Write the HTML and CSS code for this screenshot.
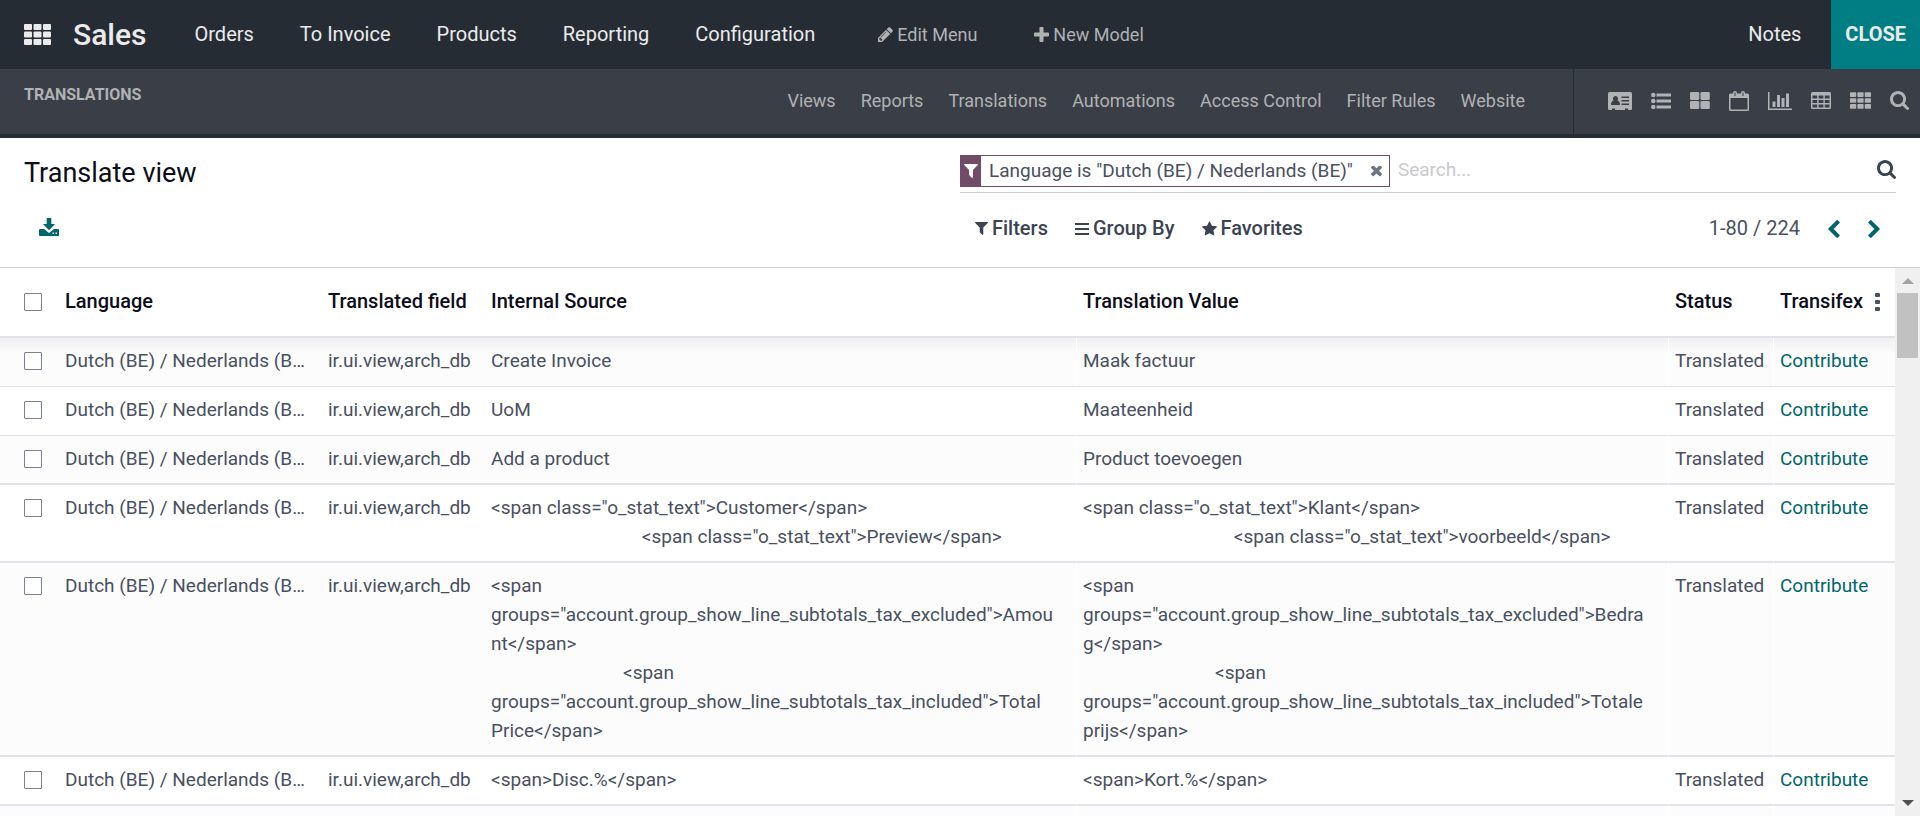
FILE: index.html
```html
<!DOCTYPE html>
<html lang="en">
<head>
<meta charset="utf-8">
<title>Sales - Translate view</title>
<link rel="stylesheet" href="styles.css">
</head>
<body>
<svg class="sprite" aria-hidden="true">
  <symbol id="i-th" viewBox="0 0 27 21"><rect x="0" y="0" width="8" height="6" rx="1"/><rect x="9.500" y="0" width="8" height="6" rx="1"/><rect x="19" y="0" width="8" height="6" rx="1"/><rect x="0" y="7.500" width="8" height="6" rx="1"/><rect x="9.500" y="7.500" width="8" height="6" rx="1"/><rect x="19" y="7.500" width="8" height="6" rx="1"/><rect x="0" y="15" width="8" height="6" rx="1"/><rect x="9.500" y="15" width="8" height="6" rx="1"/><rect x="19" y="15" width="8" height="6" rx="1"/></symbol>
  <symbol id="i-search" viewBox="64 128 1664 1664"><path d="M1216 832q0-185-131.5-316.5t-316.5-131.5-316.5 131.5-131.5 316.5 131.5 316.5 316.5 131.5 316.5-131.5 131.5-316.5zm512 832q0 52-38 90t-90 38q-54 0-90-38l-343-342q-179 124-399 124-143 0-273.5-55.5t-225-150-150-225-55.5-273.5 55.5-273.5 150-225 225-150 273.5-55.5 273.5 55.5 225 150 150 225 55.5 273.5q0 220-124 399l343 343q37 37 37 90z"/></symbol>
  <symbol id="i-filter" viewBox="190 256 1412 1412"><path d="M1595 295q17 41-14 70l-493 493v742q0 42-39 59-13 5-25 5-27 0-45-19l-256-256q-19-19-19-45v-486l-493-493q-31-29-14-70 17-39 59-39h1280q42 0 59 39z"/></symbol>
  <symbol id="i-star" viewBox="64 0 1664 1792"><path d="M1728 647q0 22-26 48l-363 354 86 500q1 7 1 20 0 21-10.5 35.5t-30.5 14.5q-19 0-40-12l-449-236-449 236q-22 12-40 12-21 0-31.5-14.5t-10.5-35.5q0-6 2-20l86-500-364-354q-25-27-25-48 0-37 56-46l502-73 225-455q19-41 49-41t49 41l225 455 502 73q56 9 56 46z"/></symbol>
  <symbol id="i-left" viewBox="410 30 1040 1610"><path d="M1427 301l-531 531 531 531q19 19 19 45t-19 45l-166 166q-19 19-45 19t-45-19l-742-742q-19-19-19-45t19-45l742-742q19-19 45-19t45 19l166 166q19 19 19 45t-19 45z"/></symbol>
  <symbol id="i-right" viewBox="344 30 1040 1610"><path d="M1363 877l-742 742q-19 19-45 19t-45-19l-166-166q-19-19-19-45t19-45l531-531-531-531q-19-19-19-45t19-45l166-166q19-19 45-19t45 19l742 742q19 19 19 45t-19 45z"/></symbol>
  <symbol id="i-pencil" viewBox="128 128 1536 1536"><path d="M491 1536l91-91-235-235-91 91v107h128v128h107zm523-928q0-22-22-22-10 0-17 7l-542 542q-7 7-7 17 0 22 22 22 10 0 17-7l542-542q7-7 7-17zm-54-192l416 416-832 832h-416v-416zm683 96q0 53-37 90l-166 166-416-416 166-165q36-38 90-38 53 0 91 38l235 234q37 39 37 91z"/></symbol>
  <symbol id="i-plus" viewBox="192 128 1408 1408"><path d="M1600 736v192q0 40-28 68t-68 28h-416v416q0 40-28 68t-68 28h-192q-40 0-68-28t-28-68v-416h-416q-40 0-68-28t-28-68v-192q0-40 28-68t68-28h416v-416q0-40 28-68t68-28h192q40 0 68 28t28 68v416h416q40 0 68 28t28 68z"/></symbol>
  <symbol id="i-times" viewBox="300 432 1192 1192"><path d="M1490 1322q0 40-28 68l-136 136q-28 28-68 28t-68-28l-294-294-294 294q-28 28-68 28t-68-28l-136-136q-28-28-28-68t28-68l294-294-294-294q-28-28-28-68t28-68l136-136q28-28 68-28t68 28l294 294 294-294q28-28 68-28t68 28l136 136q28 28 28 68t-28 68l-294 294 294 294q28 28 28 68z"/></symbol>
  <symbol id="i-bars" viewBox="0 0 14 12"><path d="M0 0h14v2H0zM0 5h14v2H0zM0 10h14v2H0z"/></symbol>
  <symbol id="i-import" viewBox="0 0 20 18"><path d="M7.700 0h4.600v6H16l-6 6.200L4 6h3.700zM1 11h4l5 4 5-4h4q1 0 1 1v5q0 1-1 1H1q-1 0-1-1v-5q0-1 1-1zm12.500 3.500V16H15v-1.500zm3 0V16H18v-1.500z" fill-rule="evenodd"/></symbol>
  <symbol id="i-card" viewBox="0 0 24 18"><path fill-rule="evenodd" d="M1.500 0h21Q24 0 24 1.500v15q0 1.500-1.500 1.500H20v-1.500h-3V18H7v-1.500H4V18H1.500Q0 18 0 16.500v-15Q0 0 1.500 0zM7.500 4a2.600 2.600 0 0 0-1.800 4.500Q3 9 3 13h9q0-4-2.700-4.500A2.600 2.600 0 0 0 7.500 4zM13.500 4.500V6H21V4.500zm0 3.500v1.500H21V8zm0 3.500V13H21v-1.500z"/></symbol>
  <symbol id="i-list" viewBox="0 0 20 18"><circle cx="2.300" cy="3" r="2.300"/><circle cx="2.300" cy="9" r="2.300"/><circle cx="2.300" cy="15" r="2.300"/><path d="M5.500 1.500H20v3H5.500zM5.500 7.500H20v3H5.500zM5.500 13.500H20v3H5.500z"/></symbol>
  <symbol id="i-large" viewBox="0 0 20 17"><rect x="0" y="0" width="9.300" height="8" rx="1.300"/><rect x="10.500" y="0" width="9.300" height="8" rx="1.300"/><rect x="0" y="9" width="9.300" height="8" rx="1.300"/><rect x="10.500" y="9" width="9.300" height="8" rx="1.300"/></symbol>
  <symbol id="i-cal" viewBox="0 0 20 20"><path fill-rule="evenodd" d="M1.500 2.500H4V2a2 2 0 0 1 4 0v.5h4V2a2 2 0 0 1 4 0v.5h2.500Q20 2.500 20 4v14.500q0 1.500-1.500 1.500h-17Q0 20 0 18.500V4q0-1.500 1.500-1.500zM1.500 7v11.500h17V7zM5.500 1.500V5h1V1.500zm8 0V5h1V1.500z"/></symbol>
  <symbol id="i-chart" viewBox="0 0 24 18"><path d="M0 0h1.500v16.500H24V18H0zM4.500 9.500h3V15h-3zM9 3h3v12H9zM13.500 6h3v9h-3zM18 1.500h3V15h-3z"/></symbol>
  <symbol id="i-table" viewBox="0 0 20 17"><path fill-rule="evenodd" d="M1.500 0h17Q20 0 20 1.500v14q0 1.500-1.500 1.500h-17Q0 17 0 15.500v-14Q0 0 1.500 0zM1.500 3.500v3h4.700v-3zm6.100 0v3h4.800v-3zm6.200 0v3h4.700v-3zM1.500 8v3h4.700V8zm6.100 0v3h4.800V8zm6.200 0v3h4.700V8zM1.500 12.500v3h4.700v-3zm6.100 0v3h4.800v-3zm6.200 0v3h4.700v-3z"/></symbol>
</svg>

<header class="navbar">
  <button class="apps" aria-label="Apps"><svg width="27" height="21"><use href="#i-th"/></svg></button>
  <a class="brand" href="#">Sales</a>
  <nav class="menu">
    <a href="#">Orders</a><a href="#">To Invoice</a><a href="#">Products</a><a href="#">Reporting</a><a href="#">Configuration</a>
  </nav>
  <div class="edit-menu">
    <a href="#"><svg width="15" height="15"><use href="#i-pencil"/></svg>Edit Menu</a>
    <a href="#"><svg width="15" height="15"><use href="#i-plus"/></svg>New Model</a>
  </div>
  <div class="systray">
    <a class="notes" href="#">Notes</a>
    <button class="close">CLOSE</button>
  </div>
</header>

<div class="subbar">
  <div class="crumb">TRANSLATIONS</div>
  <nav class="submenu">
    <a href="#">Views</a><a href="#">Reports</a><a href="#">Translations</a><a href="#">Automations</a><a href="#">Access Control</a><a href="#">Filter Rules</a><a href="#">Website</a>
  </nav>
  <div class="views">
    <button aria-label="Form"><svg width="24" height="18"><use href="#i-card"/></svg></button>
    <button aria-label="List"><svg width="20" height="18"><use href="#i-list"/></svg></button>
    <button aria-label="Kanban"><svg width="20" height="17"><use href="#i-large"/></svg></button>
    <button aria-label="Calendar"><svg width="20" height="20"><use href="#i-cal"/></svg></button>
    <button aria-label="Graph"><svg width="24" height="18"><use href="#i-chart"/></svg></button>
    <button aria-label="Pivot"><svg width="20" height="17"><use href="#i-table"/></svg></button>
    <button aria-label="Grid"><svg width="21" height="17"><use href="#i-th"/></svg></button>
    <button aria-label="Search"><svg width="19" height="19"><use href="#i-search"/></svg></button>
  </div>
</div>

<section class="panel">
  <div class="panel-left">
    <h1>Translate view</h1>
    <button class="import" aria-label="Export all"><svg width="20" height="18"><use href="#i-import"/></svg></button>
  </div>
  <div class="panel-right">
    <div class="search">
      <div class="facet">
        <span class="facet-icon"><svg width="14" height="14"><use href="#i-filter"/></svg></span>
        <span class="facet-text">Language is "Dutch (BE) / Nederlands (BE)"</span>
        <button class="facet-x" aria-label="Remove"><svg width="11" height="11"><use href="#i-times"/></svg></button>
      </div>
      <input type="text" placeholder="Search..." aria-label="Search">
      <button class="go" aria-label="Search"><svg width="19" height="19"><use href="#i-search"/></svg></button>
    </div>
    <div class="tools">
      <button><svg width="13" height="13"><use href="#i-filter"/></svg>Filters</button>
      <button><svg width="14" height="12"><use href="#i-bars"/></svg>Group By</button>
      <button><svg width="15" height="16"><use href="#i-star"/></svg>Favorites</button>
      <div class="pager">
        <span>1-80 / 224</span>
        <button aria-label="Previous"><svg width="12" height="18"><use href="#i-left"/></svg></button>
        <button aria-label="Next"><svg width="12" height="18"><use href="#i-right"/></svg></button>
      </div>
    </div>
  </div>
</section>

<main class="content">
  <div class="scroller">
    <table>
      <colgroup><col class="c-check"><col class="c-lang"><col class="c-field"><col><col><col class="c-status"><col class="c-tx"></colgroup>
      <thead>
        <tr>
          <th class="check"><input type="checkbox" aria-label="Select all"></th>
          <th>Language</th><th>Translated field</th><th>Internal Source</th><th>Translation Value</th><th>Status</th>
          <th><div class="th-last">Transifex<button aria-label="Optional columns"><i></i><i></i><i></i></button></div></th>
        </tr>
      </thead>
      <tbody>
        <tr><td class="check"><input type="checkbox" aria-label="Select row"></td><td class="lang">Dutch (BE) / Nederlands (BE)</td><td>ir.ui.view,arch_db</td><td>Create Invoice</td><td>Maak factuur</td><td>Translated</td><td><a href="#">Contribute</a></td></tr>
        <tr><td class="check"><input type="checkbox" aria-label="Select row"></td><td class="lang">Dutch (BE) / Nederlands (BE)</td><td>ir.ui.view,arch_db</td><td>UoM</td><td>Maateenheid</td><td>Translated</td><td><a href="#">Contribute</a></td></tr>
        <tr class="heavy"><td class="check"><input type="checkbox" aria-label="Select row"></td><td class="lang">Dutch (BE) / Nederlands (BE)</td><td>ir.ui.view,arch_db</td><td>Add a product</td><td>Product toevoegen</td><td>Translated</td><td><a href="#">Contribute</a></td></tr>
        <tr class="heavy"><td class="check"><input type="checkbox" aria-label="Select row"></td><td class="lang">Dutch (BE) / Nederlands (BE)</td><td>ir.ui.view,arch_db</td><td class="code">&lt;span class="o_stat_text"&gt;Customer&lt;/span&gt;
                                &lt;span class="o_stat_text"&gt;Preview&lt;/span&gt;</td><td class="code">&lt;span class="o_stat_text"&gt;Klant&lt;/span&gt;
                                &lt;span class="o_stat_text"&gt;voorbeeld&lt;/span&gt;</td><td>Translated</td><td><a href="#">Contribute</a></td></tr>
        <tr class="heavy"><td class="check"><input type="checkbox" aria-label="Select row"></td><td class="lang">Dutch (BE) / Nederlands (BE)</td><td>ir.ui.view,arch_db</td><td class="code">&lt;span groups="account.group_show_line_subtotals_tax_excluded"&gt;Amount&lt;/span&gt;
                            &lt;span groups="account.group_show_line_subtotals_tax_included"&gt;Total Price&lt;/span&gt;</td><td class="code">&lt;span groups="account.group_show_line_subtotals_tax_excluded"&gt;Bedrag&lt;/span&gt;
                            &lt;span groups="account.group_show_line_subtotals_tax_included"&gt;Totale prijs&lt;/span&gt;</td><td>Translated</td><td><a href="#">Contribute</a></td></tr>
        <tr class="heavy"><td class="check"><input type="checkbox" aria-label="Select row"></td><td class="lang">Dutch (BE) / Nederlands (BE)</td><td>ir.ui.view,arch_db</td><td>&lt;span&gt;Disc.%&lt;/span&gt;</td><td>&lt;span&gt;Kort.%&lt;/span&gt;</td><td>Translated</td><td><a href="#">Contribute</a></td></tr>
        <tr class="rest"><td></td><td></td><td></td><td></td><td></td><td></td><td></td></tr>
      </tbody>
    </table>
  </div>
  <div class="scrollbar" aria-hidden="true"><span class="arrow up"></span><span class="thumb"></span><span class="arrow down"></span></div>
</main>
</body>
</html>
```
FILE: styles.css
```css
* { box-sizing: border-box; }
body {
  margin: 0;
  height: 100vh;
  display: flex;
  flex-direction: column;
  overflow: hidden;
  background: #fff;
  color: #485060;
  font: 400 20px/29px Roboto, sans-serif;
}
.sprite { display: none; }
svg { display: block; fill: currentColor; flex: none; }
a { color: inherit; text-decoration: none; }
button { font: inherit; color: inherit; background: none; border: 0; padding: 0; cursor: pointer; }

.navbar {
  flex: none;
  display: flex;
  align-items: center;
  height: 69px;
  padding-left: 24px;
  background: #262c34;
  color: #ebebec;
}
.navbar .brand { margin: 0 48px 0 22px; font-size: 30px; font-weight: 500; }
.menu { display: flex; gap: 46px; }
.edit-menu { display: flex; gap: 57px; margin-left: 63px; color: #b0b2b4; font-size: 18px; }
.edit-menu a { display: flex; align-items: center; gap: 4px; }
.systray { display: flex; align-items: center; align-self: stretch; gap: 30px; margin-left: auto; }
.close { align-self: stretch; padding: 0 14px; background: #017e84; font-weight: 700; }

.subbar {
  flex: none;
  display: flex;
  height: 69px;
  border-bottom: 4px solid #262c34;
  background: #3a3f47;
  color: #b0b2b4;
  font-size: 18px;
}
.crumb { padding: 11px 0 0 24px; font-size: 16px; font-weight: 700; }
.submenu { display: flex; align-items: center; gap: 25px; margin-left: auto; padding: 0 48px 2px 0; }
.views {
  display: flex;
  align-items: center;
  gap: 19px;
  padding: 0 11px 2px 34px;
  border-left: 1px solid #262c34;
}

.panel {
  flex: none;
  display: flex;
  height: 130px;
  padding: 17px 24px 0;
  border-bottom: 1px solid #ccc;
}
.panel-left { flex: 1; }
.panel-right { flex: 1; }
h1 { margin: 0 0 26px; font-size: 27px; line-height: 37px; font-weight: 400; color: #0d0d1a; }
.import { display: block; margin-left: 15px; color: #01666b; }
.search { display: flex; align-items: center; height: 38px; padding-bottom: 5px; border-bottom: 1px solid #c9ccd2; font-size: 19px; }
.facet { display: flex; align-items: center; height: 32px; border: 1px solid #714b67; }
.facet-icon { display: flex; align-items: center; align-self: stretch; padding: 0 3px; background: #714b67; color: #fff; }
.facet-text { padding: 0 8px 2px; white-space: nowrap; }
.facet-x { margin: 0 7px 0 10px; color: #6c757d; }
.search input { flex: 1; min-width: 0; margin-left: 6px; padding: 0 2px 4px; border: 0; outline: 0; font: inherit; color: inherit; }
.search input::placeholder { color: #c9cacc; }
.go { padding-bottom: 4px; color: #3b4351; }
.tools { display: flex; align-items: center; gap: 27px; margin-top: 21px; padding-left: 15px; font-weight: 500; color: #3b4351; }
.tools > button { display: flex; align-items: center; gap: 4px; }
.pager { display: flex; align-items: center; gap: 28px; margin-left: auto; padding-right: 16px; font-weight: 400; color: #485060; }
.pager button { color: #01666b; }

.content { flex: 1; min-height: 0; display: flex; }
.scroller { flex: 1; min-width: 0; overflow: hidden; }
table { width: 100%; table-layout: fixed; border-collapse: separate; border-spacing: 0; }
.c-check { width: 58px; }
.c-lang { width: 263px; }
.c-field { width: 163px; }
.c-status { width: 105px; }
.c-tx { width: 122px; }
th, td { text-align: left; vertical-align: top; font-weight: 400; white-space: nowrap; }
th { padding: 19px 7px 20px; border-bottom: 2px solid #e2e2e8; font-weight: 500; color: #0d0d1a; }
td { padding: 8px 7px 11px; border-bottom: 1px solid #dee2e6; font-size: 19px; }
.heavy td { border-bottom: 2px solid #e2e2e8; padding-bottom: 10px; }
tbody tr:nth-child(odd) td { background: #fcfcfc; }
tbody tr:first-child td { background: linear-gradient(#f0f0f0, #fcfcfc 16px); }
tbody td:nth-child(n+5) { border-left: 1px solid #fff; padding-left: 6px; }
td a { color: #01666b; }
tbody .lang { padding-right: 14px; overflow: hidden; text-overflow: ellipsis; }
tbody .code { padding-right: 16px; white-space: pre-wrap; word-break: break-word; }
.rest td { height: 49px; }
th.check, td.check { padding-left: 24px; }
.check input {
  appearance: none;
  display: block;
  width: 18px;
  height: 18px;
  margin: 6px 0 0;
  border: 1px solid #7c8290;
  border-radius: 1px;
  background: #fff;
}
.th-last { display: flex; align-items: center; justify-content: space-between; padding-right: 8px; }
.th-last button { display: grid; gap: 3px; }
.th-last i { width: 5px; height: 4px; border-radius: 1px; background: #485060; }
.scrollbar { flex: none; display: flex; flex-direction: column; align-items: center; width: 25px; padding: 10px 2px; background: #f0f0f0; }
.arrow { border: 6px solid transparent; }
.up { border-top: 0; border-bottom-color: #a3a3a3; }
.down { margin-top: auto; border-bottom: 0; border-top-color: #505050; }
.thumb { width: 100%; height: 65px; margin-top: 9px; background: #c1c1c1; }
```
